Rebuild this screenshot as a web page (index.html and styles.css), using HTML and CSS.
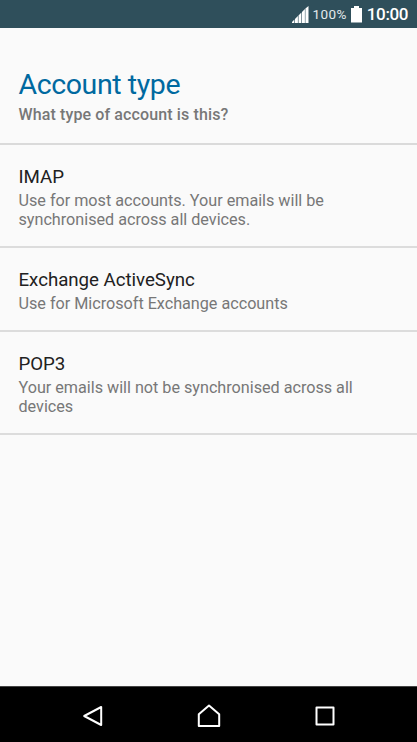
FILE: index.html
```html
<!DOCTYPE html>
<html lang="en">
<head>
<meta charset="utf-8">
<title>Account type</title>
<link rel="stylesheet" href="styles.css">
</head>
<body>
<div class="screen">
  <header class="status-bar">
    <svg class="signal" width="17" height="17" viewBox="0 0 17 17"><path d="M0 17v-1l2.400-2.400V17zM3 17v-4l2.900-2.900V17zM6.500 17V9.500l2.900-2.900V17zM10 17V6l2.900-2.900V17zM13.400 17V2.600L16.500 0v17z" fill="#fff"/></svg>
    <span class="percent">100%</span>
    <svg class="battery" width="11" height="17" viewBox="0 0 11 17"><path d="M3 0h5v2h3v14.500H0V2h3z" fill="#fff"/></svg>
    <span class="clock">10:00</span>
  </header>
  <main class="content">
    <div class="heading">
      <h1 class="title">Account type</h1>
      <p class="subtitle">What type of account is this?</p>
    </div>
    <ul class="options">
      <li class="option"><h2 class="name">IMAP</h2><p class="detail">Use for most accounts. Your emails will be<br>synchronised across all devices.</p></li>
      <li class="option"><h2 class="name">Exchange ActiveSync</h2><p class="detail">Use for Microsoft Exchange accounts</p></li>
      <li class="option"><h2 class="name">POP3</h2><p class="detail">Your emails will not be synchronised across all<br>devices</p></li>
    </ul>
  </main>
  <nav class="nav-bar">
    <svg width="24" height="24" viewBox="0 0 24 24"><path d="M20.200 3v18L3.200 12z"/></svg>
    <svg width="24" height="24" viewBox="0 0 24 24"><path d="M1.800 22V10.200L12 1.500l10.200 8.700V22z"/></svg>
    <svg width="24" height="24" viewBox="0 0 24 24"><path d="M3.500 3.500h17v17h-17z"/></svg>
  </nav>
</div>
</body>
</html>
```

FILE: styles.css
```css
* { box-sizing: border-box; margin: 0; padding: 0; }
body { font-family: Roboto, sans-serif; background: #fafafa; }
.screen { width: 417px; height: 742px; display: flex; flex-direction: column; overflow: hidden; }
.status-bar { height: 28px; background: #2f4f5b; color: #fff; display: flex; justify-content: flex-end; align-items: center; padding: 0 9px 0 0; }
.signal { margin-top: 1px; }
.percent { font-size: 13.5px; letter-spacing: .4px; margin-left: 4px; color: #e4e9eb; }
.battery { margin: 0 5px 0 4px; }
.clock { font-size: 17px; font-weight: 500; letter-spacing: -.4px; }
.content { flex: 1; }
.heading { height: 117px; padding: 39px 18.500px 0; border-bottom: 2px solid #dadada; }
.title { font-size: 28.5px; line-height: 35px; font-weight: 400; letter-spacing: -.4px; color: #0069a0; }
.subtitle { font-size: 16px; line-height: 20px; font-weight: 500; letter-spacing: .12px; color: #777; margin-top: 3px; }
.options { list-style: none; }
.option { padding: 20px 18.500px 17px; border-bottom: 2px solid #dcdcdc; }
.name { font-size: 18.7px; line-height: 24px; font-weight: 400; letter-spacing: -.03px; color: #212121; }
.detail { font-size: 16.2px; line-height: 19px; letter-spacing: -.015px; color: #777; margin-top: 2px; }
.nav-bar { height: 56px; background: #000; border-top: 1px solid #444; display: flex; align-items: center; justify-content: center; gap: 92px; padding-top: 3px; }
.nav-bar path { fill: none; stroke: #fff; stroke-width: 2; stroke-linejoin: round; }
```
